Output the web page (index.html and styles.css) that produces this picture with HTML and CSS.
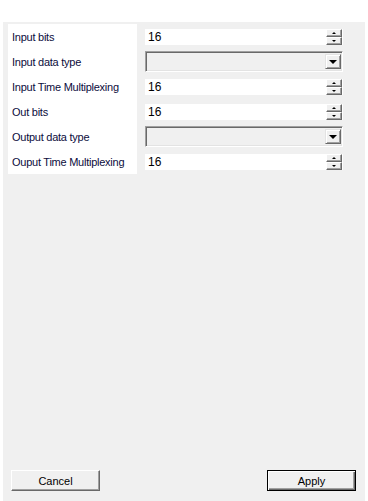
FILE: index.html
```html
<!DOCTYPE html>
<html>
<head>
<meta charset="utf-8">
<link rel="stylesheet" href="styles.css">
</head>
<body>
<div class="dialog">
  <div class="props">
    <div class="labels">
      <div class="label">Input bits</div>
      <div class="label">Input data type</div>
      <div class="label">Input Time Multiplexing</div>
      <div class="label">Out bits</div>
      <div class="label">Output data type</div>
      <div class="label">Ouput Time Multiplexing</div>
    </div>
    <div class="controls">
      <div class="row">
        <div class="spin-field"><span class="value">16</span>
          <div class="spin"><div class="sbtn"><span class="tri-up"></span></div><div class="sbtn"><span class="tri-down"></span></div></div>
        </div>
      </div>
      <div class="row">
        <div class="combo"><div class="dd"><span class="tri-big"></span></div></div>
      </div>
      <div class="row">
        <div class="spin-field"><span class="value">16</span>
          <div class="spin"><div class="sbtn"><span class="tri-up"></span></div><div class="sbtn"><span class="tri-down"></span></div></div>
        </div>
      </div>
      <div class="row">
        <div class="spin-field"><span class="value">16</span>
          <div class="spin"><div class="sbtn"><span class="tri-up"></span></div><div class="sbtn"><span class="tri-down"></span></div></div>
        </div>
      </div>
      <div class="row">
        <div class="combo"><div class="dd"><span class="tri-big"></span></div></div>
      </div>
      <div class="row">
        <div class="spin-field"><span class="value">16</span>
          <div class="spin"><div class="sbtn"><span class="tri-up"></span></div><div class="sbtn"><span class="tri-down"></span></div></div>
        </div>
      </div>
    </div>
  </div>
  <div class="footer">
    <button class="btn">Cancel</button>
    <button class="btn default">Apply</button>
  </div>
</div>
</body>
</html>
```
FILE: styles.css
```css
html, body {
  margin: 0;
  padding: 0;
  background: #ffffff;
  font-family: "Liberation Sans", Arial, sans-serif;
  font-size: 11px;
}
.dialog {
  margin: 22px 0 0 3px;
  width: 362px;
  height: 479px;
  background: #f0f0f0;
  display: flex;
  flex-direction: column;
  box-sizing: border-box;
  padding: 2px 0 0 5px;
}
.props {
  display: flex;
  gap: 8px;
}
.labels {
  width: 129px;
  background: #ffffff;
  display: flex;
  flex-direction: column;
}
.label {
  height: 25px;
  line-height: 26px;
  padding-left: 4px;
  color: #0c0c3c;
  white-space: nowrap;
  letter-spacing: -0.25px;
}
.controls {
  width: 198px;
  display: flex;
  flex-direction: column;
}
.row {
  height: 25px;
  display: flex;
  align-items: center;
}
.spin-field {
  width: 198px;
  height: 16px;
  background: #ffffff;
  display: flex;
  align-items: center;
  justify-content: space-between;
  margin-top: 1px;
}
.value {
  padding-left: 3px;
  font-size: 12px;
  color: #000;
  line-height: 16px;
}
.spin {
  width: 16px;
  height: 16px;
  display: flex;
  flex-direction: column;
  margin-right: 1px;
}
.sbtn {
  flex: 1;
  box-sizing: border-box;
  background: #f0f0f0;
  border-top: 1px solid #ffffff;
  border-left: 1px solid #ffffff;
  border-right: 1px solid #696969;
  border-bottom: 1px solid #696969;
  box-shadow: inset -1px -1px 0 #a0a0a0;
  display: flex;
  align-items: center;
  justify-content: center;
}
.tri-up {
  width: 0; height: 0;
  border-left: 2px solid transparent;
  border-right: 2px solid transparent;
  border-bottom: 2px solid #000;
}
.tri-down {
  width: 0; height: 0;
  border-left: 2px solid transparent;
  border-right: 2px solid transparent;
  border-top: 2px solid #000;
}
.combo {
  width: 198px;
  height: 21px;
  box-sizing: border-box;
  background: #f0f0f0;
  border-top: 1px solid #a0a0a0;
  border-left: 1px solid #a0a0a0;
  border-right: 1px solid #ffffff;
  border-bottom: 1px solid #ffffff;
  box-shadow: inset 1px 1px 0 #696969, inset -1px -1px 0 #e3e3e3;
  display: flex;
  justify-content: flex-end;
  padding: 2px 1px 2px 2px;
}
.dd {
  width: 16px;
  height: 15px;
  box-sizing: border-box;
  background: #f0f0f0;
  border-top: 1px solid #e3e3e3;
  border-left: 1px solid #e3e3e3;
  border-right: 1px solid #696969;
  border-bottom: 1px solid #696969;
  box-shadow: inset 1px 1px 0 #ffffff, inset -1px -1px 0 #a0a0a0;
  display: flex;
  align-items: center;
  justify-content: center;
}
.tri-big {
  width: 0; height: 0;
  border-left: 4px solid transparent;
  border-right: 4px solid transparent;
  border-top: 4px solid #000;
}
.footer {
  margin-top: auto;
  display: flex;
  justify-content: space-between;
  padding: 0 9px 10px 3px;
}
.btn {
  width: 89px;
  height: 21px;
  box-sizing: border-box;
  padding: 0;
  font-family: "Liberation Sans", Arial, sans-serif;
  font-size: 11px;
  color: #000;
  background: #f0f0f0;
  border-top: 1px solid #ffffff;
  border-left: 1px solid #ffffff;
  border-right: 1px solid #696969;
  border-bottom: 1px solid #696969;
  box-shadow: inset -1px -1px 0 #a0a0a0;
}
.btn.default {
  border: 1px solid #000;
  box-shadow: inset 1px 1px 0 #ffffff, inset -1px -1px 0 #696969, inset -2px -2px 0 #a0a0a0;
}
```
